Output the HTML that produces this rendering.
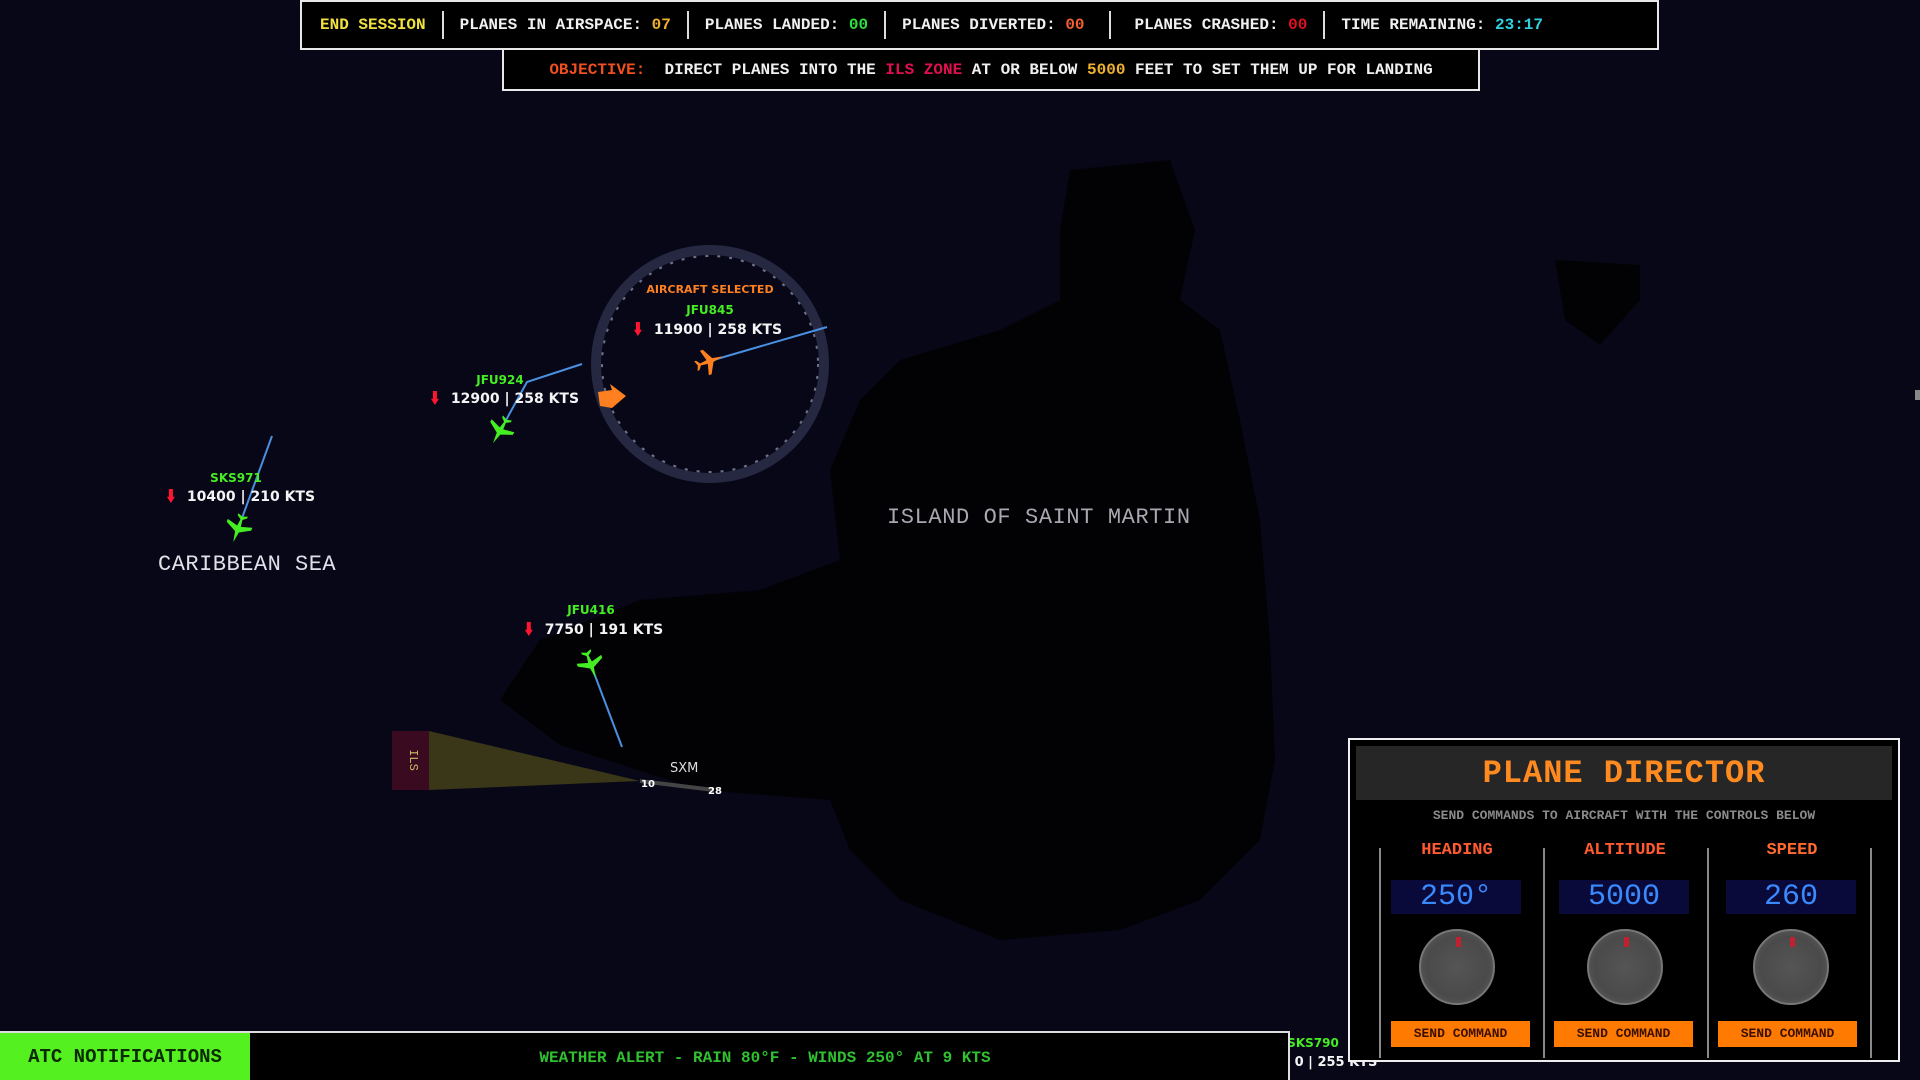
<!DOCTYPE html>
<html><head><meta charset="utf-8"><style>
*{margin:0;padding:0;box-sizing:border-box}
body{width:1920px;height:1080px;background:#070718;overflow:hidden;position:relative;font-family:"Liberation Mono",monospace;}
.a{position:absolute;white-space:nowrap}
.bar{position:absolute;background:#000;border:2px solid #e8e8e8;display:flex;align-items:center;font-weight:bold;color:#f0f0f0;font-size:16px;}
.sep{width:2px;height:28px;background:#ddd;margin:0 16px}
.lbl{font-family:"DejaVu Sans",sans-serif;font-weight:bold;font-size:14px;transform:translateX(-50%)}
.g{color:#44ee22;font-size:12px}
.w{color:#f4f4f4}
.arr{display:inline-block;width:8px;height:14px;background:#ff1530;margin-right:12px;vertical-align:-2px;clip-path:polygon(25% 0,75% 0,75% 55%,100% 55%,50% 100%,0 55%,25% 55%)}
.knob{position:absolute;width:76px;height:76px;border-radius:50%;background:radial-gradient(circle,#555 0,#4a4a4a 60%,#666 100%);border:2px solid #777}
.knob::after{content:"";position:absolute;left:35px;top:6px;width:5px;height:10px;background:#c02030}
</style></head><body>
<svg class="a" style="left:0;top:0" width="1920" height="1080">
<defs><path id="pl" d="M0,-14 L2,-3 L13,3 L13,6 L2,3 L1,10 L5,13 L5,15 L0,13 L-5,15 L-5,13 L-1,10 L-2,3 L-13,6 L-13,3 L-2,-3 Z"/></defs>
<polygon fill="#020205" points="1070,170 1170,160 1195,230 1180,300 1220,330 1240,420 1260,520 1270,640 1275,760 1260,840 1200,900 1120,930 1000,940 900,900 850,850 830,800 700,790 560,745 500,700 540,640 640,600 760,590 840,560 830,470 860,400 900,360 1000,330 1060,300 1060,230"/>
<polygon fill="#020205" points="1555,260 1640,265 1640,300 1600,345 1565,320"/>
<circle cx="710" cy="364" r="114" fill="none" stroke="#252840" stroke-width="10"/>
<circle cx="710" cy="364" r="108" fill="none" stroke="#9aa0b8" stroke-width="2" stroke-dasharray="3 9" opacity=".7"/>
<polyline points="500,431 527,382 582,364" fill="none" stroke="#4a90e0" stroke-width="2"/>
<line x1="238" y1="529" x2="272" y2="436" stroke="#4a90e0" stroke-width="2"/>
<line x1="710" y1="361" x2="827" y2="327" stroke="#4a90e0" stroke-width="2"/>
<line x1="591" y1="665" x2="622" y2="747" stroke="#4a90e0" stroke-width="2"/>
<rect x="392" y="731" width="37" height="59" fill="#3a0a20"/>
<polygon points="429,731 429,790 640,781" fill="#3a3618"/>
<line x1="640" y1="781" x2="714" y2="790" stroke="#444" stroke-width="4"/>
<text x="410" y="760" fill="#c8c060" font-size="12" font-family="Liberation Mono" transform="rotate(90 410 760)" text-anchor="middle">ILS</text>
<text x="670" y="772" fill="#ddd" font-size="13" font-family="DejaVu Sans">SXM</text>
<text x="641" y="787" fill="#fff" font-size="10" font-family="DejaVu Sans" font-weight="bold">10</text>
<text x="708" y="794" fill="#fff" font-size="10" font-family="DejaVu Sans" font-weight="bold">28</text>
<use href="#pl" transform="translate(500,431) rotate(-150)" fill="#44ee22"/>
<use href="#pl" transform="translate(238,529) rotate(-160)" fill="#44ee22"/>
<use href="#pl" transform="translate(591,665) rotate(160)" fill="#44ee22"/>
<use href="#pl" transform="translate(710,361) rotate(70)" fill="#ff8020"/>
<path d="M598,392 L612,390 L610,384 L626,396 L612,408 L600,406 Z" fill="#ff8020"/>
<rect x="1915" y="390" width="5" height="10" fill="#888"/>
</svg>
<div class="bar" style="left:300px;top:0;width:1359px;height:50px;padding-left:18px">
<span style="color:#f0e040">END SESSION</span><span class="sep"></span>
<span>PLANES IN AIRSPACE: <span style="color:#f0b030">07</span></span><span class="sep"></span>
<span>PLANES LANDED: <span style="color:#30e040">00</span></span><span class="sep"></span>
<span>PLANES DIVERTED: <span style="color:#f06030">00</span></span><span class="sep" style="margin:0 24px"></span>
<span>PLANES CRASHED: <span style="color:#e01020">00</span></span><span class="sep"></span>
<span>TIME REMAINING: <span style="color:#30d0e0">23:17</span></span>
</div>
<div class="bar" style="left:502px;top:48px;width:978px;height:43px;justify-content:center">
<span style="color:#f05020">OBJECTIVE:</span>&nbsp; DIRECT PLANES INTO THE&nbsp;<span style="color:#e01050">ILS ZONE</span>&nbsp;AT OR BELOW&nbsp;<span style="color:#f0b030">5000</span>&nbsp;FEET TO SET THEM UP FOR LANDING
</div>
<div class="a lbl" style="left:710px;top:283px;color:#ff8020;font-size:11px">AIRCRAFT SELECTED</div>
<div class="a lbl g" style="left:710px;top:303px">JFU845</div>
<div class="a lbl w" style="left:708px;top:322px"><span class="arr"></span>11900 | 258 KTS</div>
<div class="a lbl g" style="left:500px;top:373px">JFU924</div>
<div class="a lbl w" style="left:505px;top:391px"><span class="arr"></span>12900 | 258 KTS</div>
<div class="a lbl g" style="left:236px;top:471px">SKS971</div>
<div class="a lbl w" style="left:241px;top:489px"><span class="arr"></span>10400 | 210 KTS</div>
<div class="a lbl g" style="left:591px;top:603px">JFU416</div>
<div class="a lbl w" style="left:594px;top:622px"><span class="arr"></span>7750 | 191 KTS</div>
<div class="a" style="left:158px;top:552px;color:#e0e0e8;font-size:22px;letter-spacing:.5px">CARIBBEAN SEA</div>
<div class="a" style="left:887px;top:505px;color:#a8a8b0;font-size:22px;letter-spacing:.6px">ISLAND OF SAINT MARTIN</div>
<div class="a lbl g" style="left:1313px;top:1036px">SKS790</div>
<div class="a lbl w" style="left:1336px;top:1055px;font-size:13px">0 | 255 KTS</div>
<div class="a" style="left:0;top:1031px;width:1290px;height:49px;background:#000;border:2px solid #ddd;border-bottom:none"></div>
<div class="a" style="left:0;top:1033px;width:250px;height:47px;background:#55f020;color:#0a2a00;font-weight:bold;font-size:19px;display:flex;align-items:center;justify-content:center">ATC NOTIFICATIONS</div>
<div class="a" style="left:765px;top:1049px;transform:translateX(-50%);color:#30c030;font-weight:bold;font-size:16px">WEATHER ALERT - RAIN 80°F - WINDS 250° AT 9 KTS</div>
<div class="a" style="left:1348px;top:738px;width:552px;height:324px;background:#000;border:2px solid #eee">
<div class="a" style="left:6px;top:6px;width:536px;height:54px;background:#262626;color:#ff8a20;font-size:32px;font-weight:bold;display:flex;align-items:center;justify-content:center;letter-spacing:1px">PLANE DIRECTOR</div>
<div class="a" style="left:0;width:548px;top:68px;text-align:center;color:#8a8a8a;font-size:13px;font-weight:bold">SEND COMMANDS TO AIRCRAFT WITH THE CONTROLS BELOW</div>
<div class="a" style="left:29px;top:108px;width:2px;height:210px;background:#888"></div>
<div class="a" style="left:193px;top:108px;width:2px;height:210px;background:#888"></div>
<div class="a" style="left:357px;top:108px;width:2px;height:210px;background:#888"></div>
<div class="a" style="left:520px;top:108px;width:2px;height:210px;background:#888"></div>
</div>
<div class="a" style="left:1391px;top:841px;width:132px;text-align:center;color:#ff5a30;font-weight:bold;font-size:17px">HEADING</div>
<div class="a" style="left:1559px;top:841px;width:132px;text-align:center;color:#ff5a30;font-weight:bold;font-size:17px">ALTITUDE</div>
<div class="a" style="left:1726px;top:841px;width:132px;text-align:center;color:#ff6a30;font-weight:bold;font-size:17px">SPEED</div>
<div class="a" style="left:1391px;top:880px;width:130px;height:34px;background:#0a0a3a;color:#3a8aff;font-size:30px;text-align:center;line-height:34px">250°</div>
<div class="a" style="left:1559px;top:880px;width:130px;height:34px;background:#0a0a3a;color:#3a8aff;font-size:30px;text-align:center;line-height:34px">5000</div>
<div class="a" style="left:1726px;top:880px;width:130px;height:34px;background:#0a0a3a;color:#3a8aff;font-size:30px;text-align:center;line-height:34px">260</div>
<div class="knob" style="left:1419px;top:929px"></div>
<div class="knob" style="left:1587px;top:929px"></div>
<div class="knob" style="left:1753px;top:929px"></div>
<div class="a" style="left:1391px;top:1021px;width:139px;height:26px;background:#ff7a00;color:#3a1000;font-weight:bold;font-size:13px;text-align:center;line-height:26px">SEND COMMAND</div>
<div class="a" style="left:1554px;top:1021px;width:139px;height:26px;background:#ff7a00;color:#3a1000;font-weight:bold;font-size:13px;text-align:center;line-height:26px">SEND COMMAND</div>
<div class="a" style="left:1718px;top:1021px;width:139px;height:26px;background:#ff7a00;color:#3a1000;font-weight:bold;font-size:13px;text-align:center;line-height:26px">SEND COMMAND</div>
</body></html>
